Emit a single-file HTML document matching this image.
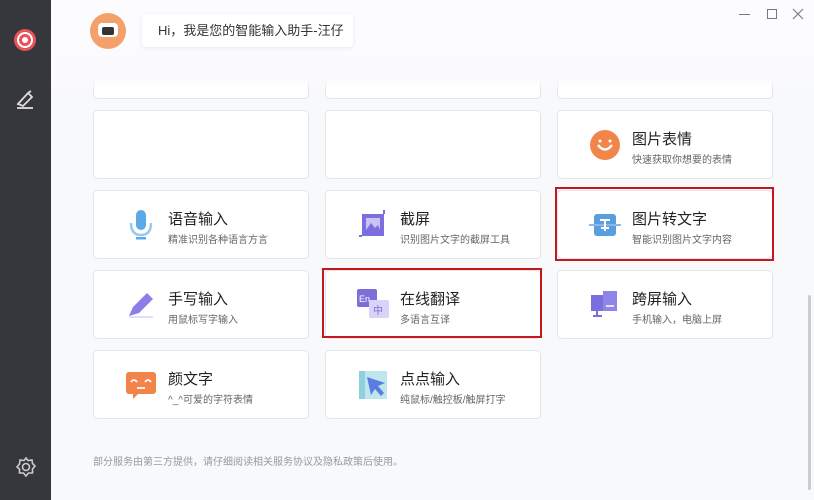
<!DOCTYPE html>
<html><head><meta charset="utf-8"><style>
*{margin:0;padding:0;box-sizing:border-box}
body{width:814px;height:500px;overflow:hidden;background:#f8f9fb;font-family:"Liberation Sans","Noto Sans CJK SC",sans-serif;position:relative}
.side{position:absolute;left:0;top:0;width:51px;height:500px;background:#36373c;z-index:5}
.card{position:absolute;width:216px;height:69px;background:#fff;border:1px solid #e4e6ea;border-radius:5px}
.t{position:absolute;left:74px;top:17px;font-size:15px;color:#222}
.s{position:absolute;left:74px;top:40px;font-size:10px;color:#666}
.ic{position:absolute;left:31px;top:18px;width:32px;height:32px}
.red{position:absolute;border:2px solid #c8161d}
.hdr{position:absolute;left:51px;top:0;width:763px;height:90px;background:linear-gradient(#fcfcfe 0,#fbfbfd 88%,rgba(250,250,252,0) 100%);z-index:2}
.z{z-index:3}
</style></head><body>
<div class="side">
<svg style="position:absolute;left:13px;top:28px" width="24" height="24"><circle cx="12" cy="12" r="11" fill="#e8525a"/><circle cx="12" cy="12" r="7" fill="none" stroke="#fff" stroke-width="2"/><circle cx="12" cy="12" r="3" fill="#fff"/></svg>
<svg style="position:absolute;left:15px;top:88px" width="22" height="22" fill="none" stroke="#ddd" stroke-width="1.8"><path d="M3 16 L13 5 L17 9 L8 18 Z M13 5 L16 3"/><path d="M2 20 H18"/></svg>
<svg style="position:absolute;left:15px;top:456px" width="22" height="22" fill="none" stroke="#ccc" stroke-width="1.6"><circle cx="11" cy="11" r="3.5"/><path d="M11 2 L13 4.5 L17 4 L17.5 7.5 L20 10 L17.5 13 L17.5 17 L13.5 17 L11 20 L8.5 17 L4.5 17 L4.5 13 L2 11 L4.5 8 L5 4 L9 4.5 Z"/></svg>
</div>
<div class="hdr"></div>
<div class="z" style="position:absolute;left:90px;top:13px;width:36px;height:36px;border-radius:50%;background:#f4a06a"><div style="position:absolute;left:8px;top:10px;width:20px;height:14px;background:#fff;border-radius:4px"></div><div style="position:absolute;left:12px;top:14px;width:12px;height:8px;background:#333;border-radius:2px"></div></div>
<div class="z" style="position:absolute;left:142px;top:14px;width:211px;height:33px;background:#fff;border-radius:4px;box-shadow:0 1px 4px rgba(0,0,0,.08);font-size:13px;color:#333;line-height:33px;padding-left:16px">Hi，我是您的智能输入助手-汪仔</div>
<div class="z" style="position:absolute;left:739px;top:14px;width:11px;border-top:1px solid #777"></div>
<div class="z" style="position:absolute;left:767px;top:9px;width:10px;height:10px;border:1px solid #777"></div>
<svg class="z" style="position:absolute;left:792px;top:8px" width="12" height="12" stroke="#777" stroke-width="1.1"><path d="M1 1 L11 11 M11 1 L1 11"/></svg>

<div class="card" style="left:93px;top:60px;height:39px"></div>
<div class="card" style="left:325px;top:60px;height:39px"></div>
<div class="card" style="left:557px;top:60px;height:39px"></div>

<div class="card" style="left:93px;top:110px"></div>
<div class="card" style="left:325px;top:110px"></div>
<div class="card" style="left:557px;top:110px"><svg class="ic" viewBox="0 0 32 32"><circle cx="16" cy="16" r="15" fill="#f2854a"/><path d="M9 16 Q16 25 23 16" stroke="#fff" stroke-width="2.5" fill="none"/><circle cx="11" cy="12" r="1.5" fill="#fff"/><circle cx="21" cy="12" r="1.5" fill="#fff"/></svg><div class="t">图片表情</div><div class="s">快速获取你想要的表情</div></div>

<div class="card" style="left:93px;top:190px"><svg class="ic" viewBox="0 0 32 32"><rect x="11" y="1" width="10" height="20" rx="5" fill="#5aa9e8"/><path d="M6 14 Q6 26 16 26 Q26 26 26 14" stroke="#9ac8ee" stroke-width="2.5" fill="none"/><rect x="11" y="28" width="10" height="2.5" fill="#5aa9e8"/></svg><div class="t">语音输入</div><div class="s">精准识别各种语言方言</div></div>
<div class="card" style="left:325px;top:190px"><svg class="ic" viewBox="0 0 32 32"><rect x="5" y="5" width="22" height="22" fill="#7b6fe0"/><rect x="9" y="9" width="14" height="12" fill="#c9c2f5"/><path d="M9 21 L14 14 L18 19 L21 16 L23 21Z" fill="#7b6fe0"/><path d="M27 1 V5 M2 27 H5" stroke="#7b6fe0" stroke-width="2"/></svg><div class="t">截屏</div><div class="s">识别图片文字的截屏工具</div></div>
<div class="card" style="left:557px;top:190px"><svg class="ic" viewBox="0 0 32 32"><rect x="5" y="5" width="22" height="22" rx="3" fill="#5b9ee0"/><path d="M0 16 H32" stroke="#8ab8e8" stroke-width="2"/><path d="M11 11 H21 M16 11 V22 M12 19 H20" stroke="#fff" stroke-width="2"/></svg><div class="t">图片转文字</div><div class="s">智能识别图片文字内容</div></div>

<div class="card" style="left:93px;top:270px"><svg class="ic" viewBox="0 0 32 32"><path d="M4 27 L8 18 L22 4 L28 10 L14 24 Z" fill="#8a7ee8"/><path d="M4 28 H28" stroke="#d8d3f7" stroke-width="1.5"/></svg><div class="t">手写输入</div><div class="s">用鼠标写字输入</div></div>
<div class="card" style="left:325px;top:270px"><svg class="ic" viewBox="0 0 32 32"><rect x="0" y="0" width="20" height="18" rx="2" fill="#7c6fd8"/><text x="2" y="13" font-size="9" fill="#fff" font-family="Liberation Sans">En</text><rect x="12" y="11" width="20" height="18" rx="2" fill="#d9d3f7"/><text x="16" y="25" font-size="10" fill="#7c6fd8" font-family="Noto Sans CJK SC">中</text></svg><div class="t">在线翻译</div><div class="s">多语言互译</div></div>
<div class="card" style="left:557px;top:270px"><svg class="ic" viewBox="0 0 32 32"><rect x="2" y="6" width="18" height="16" fill="#7b6fe0"/><rect x="14" y="2" width="14" height="20" fill="#8f85e8"/><path d="M17 17 H25" stroke="#fff" stroke-width="1.5"/><path d="M8 22 V27 M4 27 H13" stroke="#7b6fe0" stroke-width="2"/></svg><div class="t">跨屏输入</div><div class="s">手机输入，电脑上屏</div></div>

<div class="card" style="left:93px;top:350px"><svg class="ic" viewBox="0 0 32 32"><rect x="1" y="3" width="30" height="22" rx="3" fill="#f2844a"/><path d="M8 25 L8 30 L13 25Z" fill="#f2844a"/><path d="M6 13 Q9 9 12 13 M20 13 Q23 9 26 13 M12 19 H20" stroke="#fff" stroke-width="1.8" fill="none"/></svg><div class="t">颜文字</div><div class="s">^_^可爱的字符表情</div></div>
<div class="card" style="left:325px;top:350px"><svg class="ic" viewBox="0 0 32 32"><rect x="2" y="2" width="28" height="28" fill="#bfe6ee"/><rect x="2" y="2" width="6" height="28" fill="#8fd0de"/><path d="M10 8 L28 14 L21 17 L27 24 L24 27 L18 20 L14 26 Z" fill="#5a7de0"/></svg><div class="t">点点输入</div><div class="s">纯鼠标/触控板/触屏打字</div></div>

<div class="red" style="left:555px;top:187px;width:219px;height:74px"></div>
<div class="red" style="left:322px;top:268px;width:220px;height:70px"></div>

<div style="position:absolute;left:93px;top:453px;font-size:10px;color:#999">部分服务由第三方提供，请仔细阅读相关服务协议及隐私政策后使用。</div>
<div style="position:absolute;left:808px;top:295px;width:3px;height:195px;background:#ccc;border-radius:2px"></div>
</body></html>
